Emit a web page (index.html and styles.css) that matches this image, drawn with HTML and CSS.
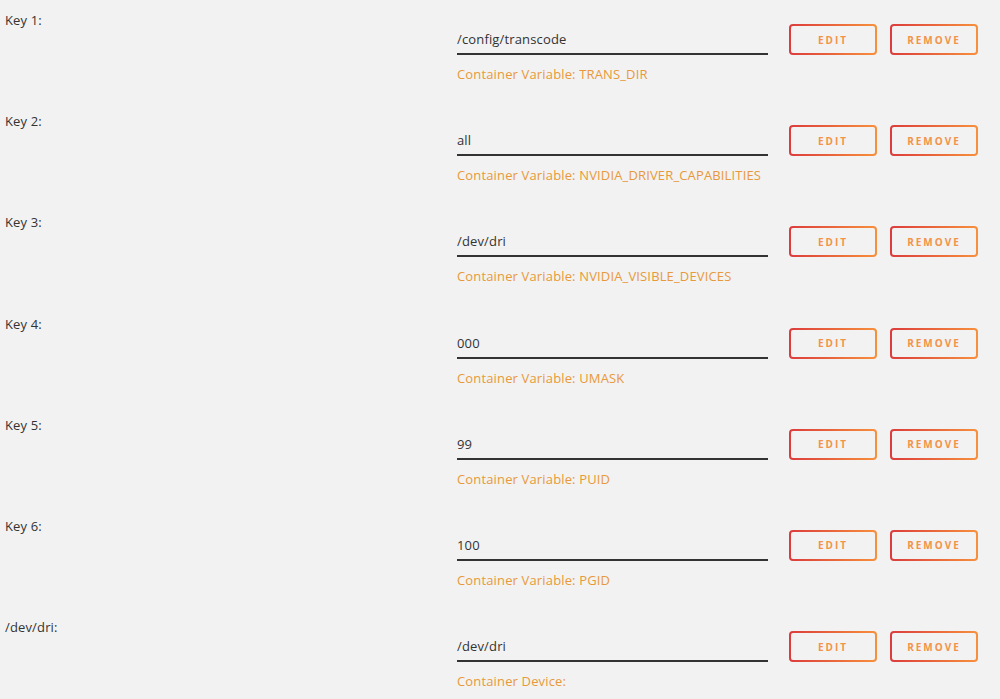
FILE: index.html
```html
<!DOCTYPE html>
<html lang="en">
  <head>
    <meta charset="UTF-8">
    <title>Container Settings</title>
    <link rel="stylesheet" href="styles.css">
  </head>
<body>
  <div class="settings">

    <div class="row">
      <label class="key">Key 1:</label>
      <div class="field">
        <div class="value-line">
          <input class="value" type="text" value="/config/transcode">
          <button class="btn">Edit</button>
          <button class="btn">Remove</button>
        </div>
        <div class="hint">Container Variable: TRANS_DIR</div>
      </div>
    </div>

    <div class="row">
      <label class="key">Key 2:</label>
      <div class="field">
        <div class="value-line">
          <input class="value" type="text" value="all">
          <button class="btn">Edit</button>
          <button class="btn">Remove</button>
        </div>
        <div class="hint">Container Variable: NVIDIA_DRIVER_CAPABILITIES</div>
      </div>
    </div>

    <div class="row">
      <label class="key">Key 3:</label>
      <div class="field">
        <div class="value-line">
          <input class="value" type="text" value="/dev/dri">
          <button class="btn">Edit</button>
          <button class="btn">Remove</button>
        </div>
        <div class="hint">Container Variable: NVIDIA_VISIBLE_DEVICES</div>
      </div>
    </div>

    <div class="row">
      <label class="key">Key 4:</label>
      <div class="field">
        <div class="value-line">
          <input class="value" type="text" value="000">
          <button class="btn">Edit</button>
          <button class="btn">Remove</button>
        </div>
        <div class="hint">Container Variable: UMASK</div>
      </div>
    </div>

    <div class="row">
      <label class="key">Key 5:</label>
      <div class="field">
        <div class="value-line">
          <input class="value" type="text" value="99">
          <button class="btn">Edit</button>
          <button class="btn">Remove</button>
        </div>
        <div class="hint">Container Variable: PUID</div>
      </div>
    </div>

    <div class="row">
      <label class="key">Key 6:</label>
      <div class="field">
        <div class="value-line">
          <input class="value" type="text" value="100">
          <button class="btn">Edit</button>
          <button class="btn">Remove</button>
        </div>
        <div class="hint">Container Variable: PGID</div>
      </div>
    </div>

    <div class="row">
      <label class="key">/dev/dri:</label>
      <div class="field">
        <div class="value-line">
          <input class="value" type="text" value="/dev/dri">
          <button class="btn">Edit</button>
          <button class="btn">Remove</button>
        </div>
        <div class="hint">Container Device:</div>
      </div>
    </div>

  </div>
</body>
</html>
```

FILE: styles.css
```css
body {
  margin: 0;
  padding: 0;
  background: #f2f2f2;
  font-family: 'Open Sans', sans-serif;
  font-size: 13px;
  letter-spacing: 0.15px;
  color: #333;
}

.settings {
  padding: 12px 0 0 5px;
}

.row {
  display: grid;
  grid-template-columns: 452px 1fr;
  height: 101.2px;
}

.key {
  line-height: 16px;
  color: #333;
}

.field {
  padding-top: 12px;
}

.value-line {
  display: flex;
  align-items: flex-start;
}

.value {
  width: 311px;
  height: 31px;
  box-sizing: border-box;
  margin: 0 21px 0 0;
  padding: 1px 0 0;
  border: none;
  border-bottom: 2px solid #333;
  background: transparent;
  font-family: inherit;
  font-size: 13px;
  letter-spacing: 0.15px;
  color: #333;
  outline: none;
}

.btn {
  width: 88px;
  height: 31px;
  margin-right: 13px;
  border: 2px solid transparent;
  border-radius: 4px;
  background: linear-gradient(#f2f2f2, #f2f2f2) padding-box,
              linear-gradient(to right, #dc3c3c, #f7903c) border-box;
  color: #f2934a;
  font-family: inherit;
  font-size: 10px;
  font-weight: 700;
  letter-spacing: 2px;
  text-transform: uppercase;
  cursor: pointer;
}

.hint {
  margin-top: 11px;
  line-height: 16px;
  color: #e8993a;
}
```
